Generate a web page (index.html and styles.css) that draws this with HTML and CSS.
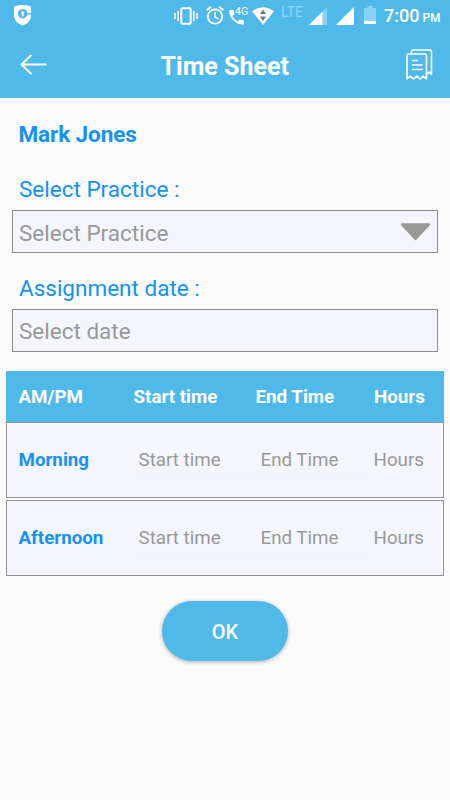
FILE: index.html
```html
<!DOCTYPE html>
<html lang="en">
<head>
<meta charset="utf-8">
<title>Time Sheet</title>
<link rel="stylesheet" href="styles.css">
</head>
<body>
<header class="header">
  <div class="status">
    <svg class="shield" width="18" height="21" viewBox="0 0 18 21"><path d="M1.500 1Q9-.8 15.500 1q1.500.4 1.500 1.800V10c0 5-2 8-8.300 10.500C2.500 18 0 15 0 10V2.500Q0 1.300 1.500 1z" fill="#fff"/><circle cx="8.700" cy="8.700" r="4.800" fill="#4fb9ea"/><path d="M12 8h6v1.500h-6z" fill="#4fb9ea"/><path d="M8.700 6.200a1.600 1.600 0 0 1 .8 2.900V11.500H7.900V9.100a1.600 1.600 0 0 1 .8-2.900z" fill="#fff"/></svg>
    <svg class="vibrate" width="24" height="18" viewBox="0 0 24 18" fill="none" stroke="#fff"><rect x="7.300" y="1.300" width="9.400" height="15.400" rx="1" stroke-width="2"/><path d="M1 6v6M4.200 4v10M19.800 4v10M23 6v6" stroke-width="1.600"/></svg>
    <svg class="alarm" width="18" height="19" viewBox="0 0 18 19" fill="none" stroke="#fff"><circle cx="9" cy="10.500" r="7.200" stroke-width="1.800"/><path d="M.6 4.300 5 .8M13 .8l4.400 3.500" stroke-width="1.800"/><path d="M9 6v5l3.600 2.200" stroke-width="1.500"/></svg>
    <div class="call">
      <svg width="15" height="16" viewBox="0 0 16 17"><path d="M1 1h3.300q.7 0 .8.800 0 1.700.6 3.200.1.500-.2.900L3.600 7.800a13 13 0 0 0 5.500 5.500l1.900-1.900q.4-.4.9-.2 1.500.5 3.200.6.800.1.800.8v3.200q0 .9-.9.900C7 16.700.2 9.500.2 1.900Q.2 1 1 1z" fill="#fff"/></svg>
      <span class="net">4G</span>
    </div>
    <svg class="wifi" width="22" height="18" viewBox="0 0 22 18"><path d="M0 4.300Q11-3.800 22 4.300L11 18z" fill="#fff"/><path d="M8 7h6l-3-4.400zM8 9.500h6L11 13.900z" fill="#777"/></svg>
    <span class="lte">LTE</span>
    <svg class="sig1" width="18" height="18" viewBox="0 0 18 18"><path d="M18 0v18H0z" fill="#89d1f1"/><path d="M13.500 4.500V18H0z" fill="#fff"/></svg>
    <svg class="sig2" width="18" height="18" viewBox="0 0 18 18"><path d="M18 0v18H0z" fill="#fff"/></svg>
    <svg class="battery" width="12" height="18" viewBox="0 0 12 18"><path d="M1 2h2.500V0h5v2H11q1 0 1 1v14q0 1-1 1H1q-1 0-1-1V3q0-1 1-1z" fill="#89d1f1"/><path d="M0 15h12v2q0 1-1 1H1q-1 0-1-1z" fill="#fff"/></svg>
    <div class="clock"><span>7:00</span><small>PM</small></div>
  </div>
  <div class="toolbar">
    <svg class="back" width="27" height="20" viewBox="0 0 27 20" fill="none" stroke="#fff" stroke-width="2"><path d="M26.500 9.500H1.500M11.300 0 1.500 9.500l9.800 9.500"/></svg>
    <h1 class="title">Time Sheet</h1>
    <svg class="receipts" width="27" height="32" viewBox="0 0 27 32" fill="none" stroke="#fff" stroke-width="1.600" stroke-linejoin="round" stroke-linecap="round"><path d="M1 30V6.500Q1 5 2.500 5H19q1.500 0 1.500 1.500V30l-3-2.800-3.300 2.800-3.400-2.800L7.500 30l-3.300-2.800zM5.500 4.500V2.500Q5.500 1 7 1h17q1.500 0 1.500 1.500V25.500l-2-2.300-2.700 2M6.500 11.500h5M6.500 16h9.500M6.500 20.500h9.500"/></svg>
  </div>
</header>
<main>
  <h2 class="name">Mark Jones</h2>
  <div class="label">Select Practice :</div>
  <div class="field"><span>Select Practice</span><svg width="31" height="18" viewBox="0 0 31 18"><path d="M2 1.500h27L15.500 16z" fill="#999" stroke="#999" stroke-width="2.500" stroke-linejoin="round"/></svg></div>
  <div class="label label-date">Assignment date :</div>
  <div class="field field-date"><span>Select date</span></div>
  <section class="table">
    <div class="row head"><span>AM/PM</span><span>Start time</span><span>End Time</span><span>Hours</span></div>
    <div class="row body"><b>Morning</b><span class="input">Start time</span><span class="input">End Time</span><span>Hours</span></div>
    <div class="row body"><b>Afternoon</b><span class="input">Start time</span><span class="input">End Time</span><span>Hours</span></div>
  </section>
  <button class="ok">OK</button>
</main>
</body>
</html>
```
FILE: styles.css
```css
* { box-sizing: border-box; }
body {
  margin: 0;
  min-height: 800px;
  background: #fafafa;
  font-family: Roboto, sans-serif;
  color: #999;
}
svg { display: block; flex: none; }
.header { height: 98px; background: #4fb9ea; color: #fff; }
.status { display: flex; align-items: flex-start; height: 32px; padding: 6px 0 0 14px; white-space: nowrap; }
.shield { margin-top: -1px; }
.vibrate { margin: 1px 0 0 142px; }
.alarm { margin-left: 8px; }
.call { position: relative; width: 18px; margin: 3px 0 0 5px; }
.net { position: absolute; left: 6px; top: -3px; font-size: 10.500px; line-height: 12px; }
.wifi { margin: 1px 0 0 5px; }
.lte { width: 24px; margin-left: 7px; font-size: 14px; line-height: 12px; color: #91d3f2; }
.sig1 { margin: 1px 0 0 4px; }
.sig2 { margin: 1px 0 0 9px; }
.battery { margin-left: 10px; }
.clock { display: flex; align-items: baseline; gap: 3px; margin-left: 8px; line-height: 20px; }
.clock span { font-size: 18px; font-weight: 500; }
.clock small { font-size: 12px; font-weight: 500; }
.toolbar { display: flex; align-items: center; height: 66px; padding: 0 17.500px 0 20px; }
.title { flex: 1; margin: 3px 0 0 -3px; text-align: center; font-size: 25px; line-height: 30px; font-weight: 700; }
main { display: flex; flex-direction: column; }
.name { margin: 21px 0 0 18.500px; font-size: 22.500px; line-height: 30px; letter-spacing: -.1px; color: #1592f3; }
.label { margin: 25px 0 0 19px; font-size: 22.500px; line-height: 30px; color: #1592f3; }
.label-date { margin-top: 20px; }
.field {
  display: flex;
  justify-content: space-between;
  align-items: center;
  height: 43px;
  margin: 6px 12px 0;
  padding: 2px 6px 0 6px;
  border: 1px solid #8b8b8b;
  background: #f4f6fb;
  font-size: 22.500px;
}
.field-date { padding-top: 1px; }
.field svg { margin-top: -2px; }
.table { display: flex; flex-direction: column; gap: 2px; margin: 19px 6px 0; font-size: 18.750px; }
.row { display: grid; align-items: center; white-space: nowrap; }
.head { grid-template-columns: 115px 122px 118.500px 1fr; height: 51px; margin-bottom: -2px; padding-left: 12.500px; background: #4fb9ea; color: #fff; font-weight: 700; }
.body { grid-template-columns: 120px 122px 113px 1fr; height: 76px; padding-left: 11.500px; border: 1px solid #929292; background: #f4f6fb; }
.body b { color: #1592f3; }
.input { height: 32px; margin-right: 8px; border-bottom: 1px solid #f1f2f5; line-height: 32px; }
.ok {
  align-self: center;
  width: 126px;
  height: 60px;
  margin-top: 25px;
  padding: 2px 0 0;
  border: 0;
  border-radius: 30px;
  background: #4fb9ea;
  box-shadow: 0 1px 4px rgba(0, 0, 0, .3);
  color: #fff;
  font: 500 20px Roboto, sans-serif;
}
```
